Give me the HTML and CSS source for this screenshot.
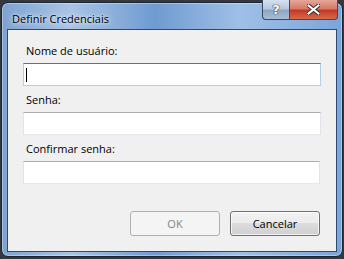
FILE: index.html
```html
<!DOCTYPE html>
<html lang="pt-BR">
<head>
    <meta charset="UTF-8">
    <meta name="viewport" content="width=device-width, initial-scale=1.0">
    <title>Definir Credenciais</title>
    <link rel="stylesheet" href="styles.css">
</head>
<body>
    <div class="window">
        <div class="titlebar">
            <span class="title">Definir Credenciais</span>
            <div class="caption-buttons">
                <div class="cap-btn help">?</div>
                <div class="cap-btn close">
                    <svg width="13" height="11" viewBox="0 0 13 11">
                        <path d="M1.5 1.5 L11.5 9.5 M11.5 1.5 L1.5 9.5" stroke="#3a2a2a" stroke-width="4" stroke-linecap="square"/>
                        <path d="M1.5 1.5 L11.5 9.5 M11.5 1.5 L1.5 9.5" stroke="#fff" stroke-width="2" stroke-linecap="square"/>
                    </svg>
                </div>
            </div>
        </div>
        <div class="client">
            <div class="field">
                <label class="label">Nome de usuário:</label>
                <div class="textbox focused"><span class="caret"></span></div>
            </div>
            <div class="field">
                <label class="label">Senha:</label>
                <div class="textbox"></div>
            </div>
            <div class="field">
                <label class="label">Confirmar senha:</label>
                <div class="textbox narrow"></div>
            </div>
            <div class="actions">
                <button class="btn" disabled>OK</button>
                <button class="btn">Cancelar</button>
            </div>
        </div>
    </div>
</body>
</html>
```

FILE: styles.css
```css
body {
    margin: 0;
    height: 259px;
    overflow: hidden;
    background-color: #34383f;
    font-family: "Open Sans", "Noto Sans", sans-serif;
    font-size: 11px;
}

.window {
    box-sizing: border-box;
    width: 342px;
    height: 255px;
    margin: 2px 0 0 1px;
    padding: 0 5px 4px 5px;
    border: 1px solid #1c2633;
    border-radius: 7px;
    background: linear-gradient(90deg, #7ea2d0 0%, #a9c4e4 20%, #6f9bd2 45%, #9fc0e6 70%, #7aa5da 100%);
    box-shadow: inset 0 0 0 1px rgba(255, 255, 255, 0.35);
}

.titlebar {
    display: flex;
    justify-content: space-between;
    align-items: flex-start;
    height: 26px;
}

.title {
    margin: 8px 0 0 5px;
    line-height: 16px;
    color: #000;
    text-shadow: 0 0 6px #e8f1fb, 0 0 3px #e8f1fb;
}

.caption-buttons {
    display: flex;
    margin: -3px -1px 0 0;
}

.cap-btn {
    box-sizing: border-box;
    height: 20px;
    display: flex;
    justify-content: center;
    align-items: center;
    border: 1px solid #3a4a62;
    border-top: none;
}

.help {
    width: 27px;
    border-right: none;
    border-bottom-left-radius: 4px;
    background: linear-gradient(#d5e1ef 0%, #b7c9de 45%, #8fa6c3 55%, #a9bdd5 100%);
    color: #fff;
    font-family: "DejaVu Sans", sans-serif;
    font-weight: bold;
    font-size: 13px;
    text-shadow: 0 0 1px #2c3a4e, 0 0 1px #2c3a4e, 0 0 1px #2c3a4e;
}

.close {
    width: 49px;
    border-bottom-right-radius: 4px;
    background: linear-gradient(#e6a89a 0%, #d77a66 45%, #c23a24 55%, #d56a4c 100%);
}

.client {
    height: 223px;
    box-sizing: border-box;
    padding: 13px 15px 0 15px;
    border: 1px solid #2f4a70;
    background-color: #f0f0f0;
}

.field {
    margin-bottom: 6px;
}

.label {
    display: block;
    margin: 0 0 4px 3px;
    line-height: 16px;
    color: #000;
}

.textbox {
    box-sizing: border-box;
    height: 23px;
    border: 1px solid #e2e3ea;
    border-top-color: #abadb3;
    border-bottom-color: #e3e9ef;
    background-color: #fff;
    display: flex;
    align-items: center;
    padding-left: 2px;
}

.textbox.focused {
    border-color: #b5cfe7;
    border-top-color: #3d7bad;
}

.textbox.narrow {
    margin-right: 1px;
}

.caret {
    width: 1px;
    height: 14px;
    background-color: #000;
}

.actions {
    display: flex;
    justify-content: flex-end;
    gap: 10px;
    margin-top: 27px;
    padding-right: 1px;
}

.btn {
    width: 90px;
    height: 25px;
    padding: 0;
    border: 1px solid #707070;
    border-radius: 3px;
    background: linear-gradient(#f2f2f2 0%, #ebebeb 50%, #dddddd 50%, #cfcfcf 100%);
    box-shadow: inset 0 0 0 1px rgba(255, 255, 255, 0.7);
    font-family: inherit;
    font-size: 11px;
    color: #000;
}

.btn:disabled {
    border-color: #adb2b5;
    background: #f4f4f4;
    box-shadow: none;
    color: #838383;
}
```
